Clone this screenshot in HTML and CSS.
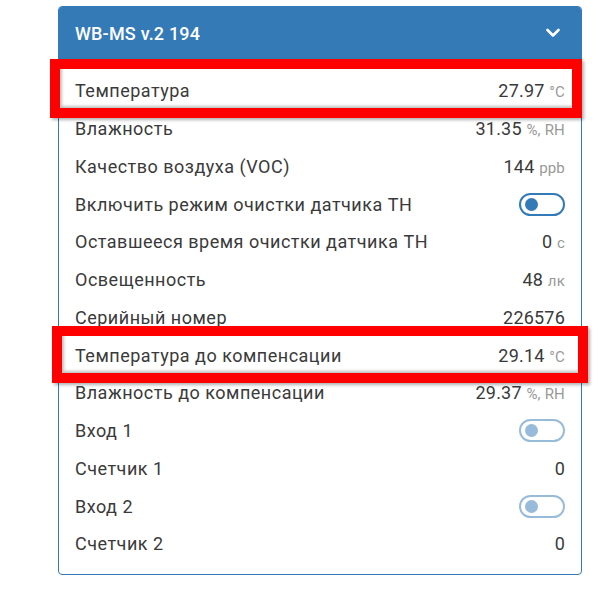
FILE: index.html
```html
<!DOCTYPE html>
<html lang="ru">
<head>
<meta charset="utf-8">
<title>WB-MS v.2 194</title>
<link rel="stylesheet" href="styles.css">
</head>
<body>
<div class="panel">
  <div class="panel-heading">
    <span class="panel-title">WB-MS v.2 194</span>
    <svg class="chevron" width="14" height="10" viewBox="0 0 14 10"><path d="M1.5 2 L7 7.5 L12.5 2" fill="none" stroke="#fff" stroke-width="2.6" stroke-linecap="round" stroke-linejoin="round"/></svg>
  </div>
  <div class="panel-body">
    <div class="row highlight highlight-a"><span class="label">Температура</span><span class="value">27.97 <span class="unit">°C</span></span></div>
    <div class="row"><span class="label">Влажность</span><span class="value">31.35 <span class="unit">%, RH</span></span></div>
    <div class="row"><span class="label">Качество воздуха (VOC)</span><span class="value">144 <span class="unit">ppb</span></span></div>
    <div class="row"><span class="label">Включить режим очистки датчика TH</span><span class="toggle"><span class="knob"></span></span></div>
    <div class="row"><span class="label">Оставшееся время очистки датчика TH</span><span class="value">0 <span class="unit">с</span></span></div>
    <div class="row"><span class="label">Освещенность</span><span class="value">48 <span class="unit">лк</span></span></div>
    <div class="row"><span class="label">Серийный номер</span><span class="value">226576</span></div>
    <div class="row highlight highlight-b"><span class="label">Температура до компенсации</span><span class="value">29.14 <span class="unit">°C</span></span></div>
    <div class="row"><span class="label">Влажность до компенсации</span><span class="value">29.37 <span class="unit">%, RH</span></span></div>
    <div class="row"><span class="label">Вход 1</span><span class="toggle toggle-disabled"><span class="knob"></span></span></div>
    <div class="row"><span class="label">Счетчик 1</span><span class="value">0</span></div>
    <div class="row"><span class="label">Вход 2</span><span class="toggle toggle-disabled"><span class="knob"></span></span></div>
    <div class="row"><span class="label">Счетчик 2</span><span class="value">0</span></div>
  </div>
</div>
</body>
</html>
```

FILE: styles.css
```css
html, body {
  margin: 0;
  padding: 0;
  background: #fff;
}
body {
  font-family: Roboto, "Noto Sans", sans-serif;
  color: #333;
  padding: 6px 0 0 58px;
}
.panel {
  width: 522px;
  height: 567px;
  border: 1px solid #337ab7;
  border-radius: 4px;
  overflow: visible;
}
.panel-heading {
  height: 52px;
  background: #337ab7;
  border-radius: 3px 3px 0 0;
  display: flex;
  align-items: center;
  justify-content: space-between;
  padding: 0 21px 0 16px;
  color: #fff;
}
.panel-title {
  font-size: 18px;
  font-weight: 500;
  letter-spacing: 0.2px;
}
.chevron {
  display: block;
}
.panel-body {
  padding: 13px 0 12px;
}
.row {
  position: relative;
  height: 37.75px;
  display: flex;
  align-items: center;
  justify-content: space-between;
  padding: 0 16px;
  font-size: 18px;
  letter-spacing: 0.5px;
}
.label {
  color: #3a3a3a;
}
.value {
  color: #3a3a3a;
  letter-spacing: 0.2px;
}
.unit {
  color: #999;
  font-size: 15px;
}
.toggle {
  box-sizing: border-box;
  width: 46px;
  height: 23px;
  border: 2px solid #337ab7;
  border-radius: 12px;
  display: flex;
  align-items: center;
  padding-left: 4px;
}
.knob {
  width: 13px;
  height: 13px;
  border-radius: 50%;
  background: #337ab7;
}
.toggle-disabled {
  opacity: 0.5;
}
.highlight::before {
  content: "";
  position: absolute;
  border: 10px solid #ff0000;
  box-shadow: 2px 2px 3px rgba(0,0,0,0.3), inset 2px -2px 3px rgba(0,0,0,0.25);
  pointer-events: none;
}
.highlight-a::before {
  top: -13px;
  bottom: -8px;
  left: -9px;
  right: -1px;
}
.highlight-b::before {
  top: -10px;
  bottom: -9px;
  left: -7px;
  right: -7px;
}
```
